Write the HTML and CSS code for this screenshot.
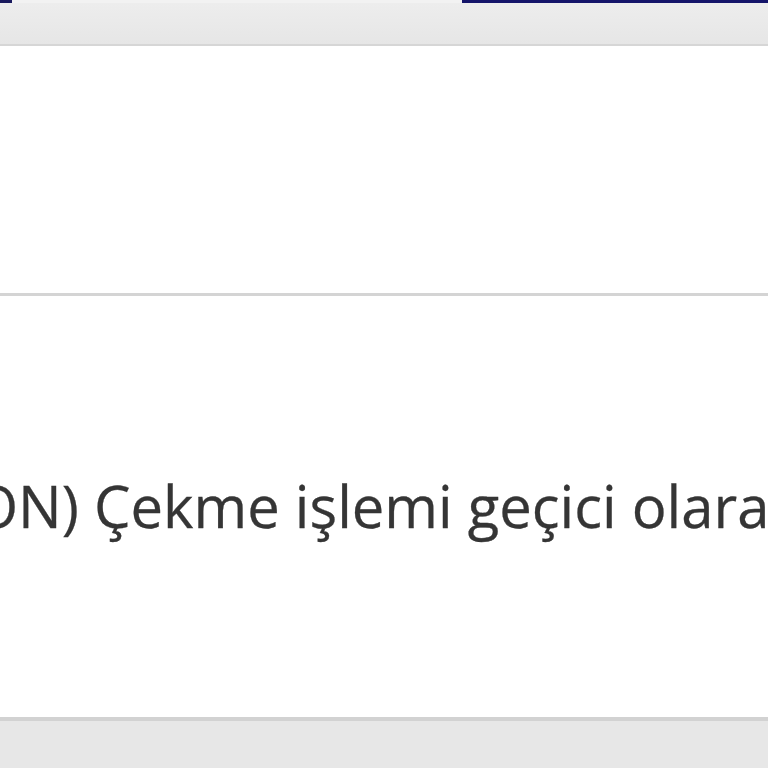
FILE: index.html
```html
<!DOCTYPE html>
<html lang="tr">
<head>
<meta charset="utf-8">
<link rel="stylesheet" href="styles.css">
</head>
<body>
<div class="page">
  <div class="topstrip">
    <div class="strip-left"></div>
    <div class="strip-gap"></div>
    <div class="strip-right"></div>
  </div>
  <div class="toolbar"></div>
  <div class="panel-top"></div>
  <div class="panel-main">
    <p class="message">ON) Çekme işlemi geçici olarak durduruldu</p>
  </div>
  <div class="footer"></div>
</div>
</body>
</html>
```
FILE: styles.css
```css
html, body {
  margin: 0;
  padding: 0;
  background: #ffffff;
  overflow: hidden;
}
.page {
  width: 768px;
  height: 768px;
  display: flex;
  flex-direction: column;
  overflow: hidden;
}
.topstrip {
  display: flex;
  height: 3px;
  flex: none;
}
.strip-left {
  width: 12px;
  background: #1a1a5e;
}
.strip-gap {
  width: 450px;
  background: #f2f2f2;
}
.strip-right {
  flex: 1;
  background: #15156a;
}
.toolbar {
  height: 41px;
  flex: none;
  background: linear-gradient(#ededed, #e6e6e6);
  border-bottom: 2px solid #d6d6d6;
}
.panel-top {
  height: 247px;
  flex: none;
  background: #ffffff;
  border-bottom: 3px solid #d4d4d4;
}
.panel-main {
  height: 421px;
  flex: none;
  background: #ffffff;
  display: flex;
  flex-direction: column;
  justify-content: flex-start;
  overflow: hidden;
}
.message {
  margin: 170px 0 0 -27px;
  white-space: nowrap;
  font-family: "Open Sans", "Noto Sans", sans-serif;
  font-size: 58px;
  line-height: 80px;
  color: #353535;
  -webkit-text-stroke: 0.3px #353535;
}
.footer {
  flex: 1;
  background: #e7e7e7;
  border-top: 4px solid #d2d2d2;
}
```
